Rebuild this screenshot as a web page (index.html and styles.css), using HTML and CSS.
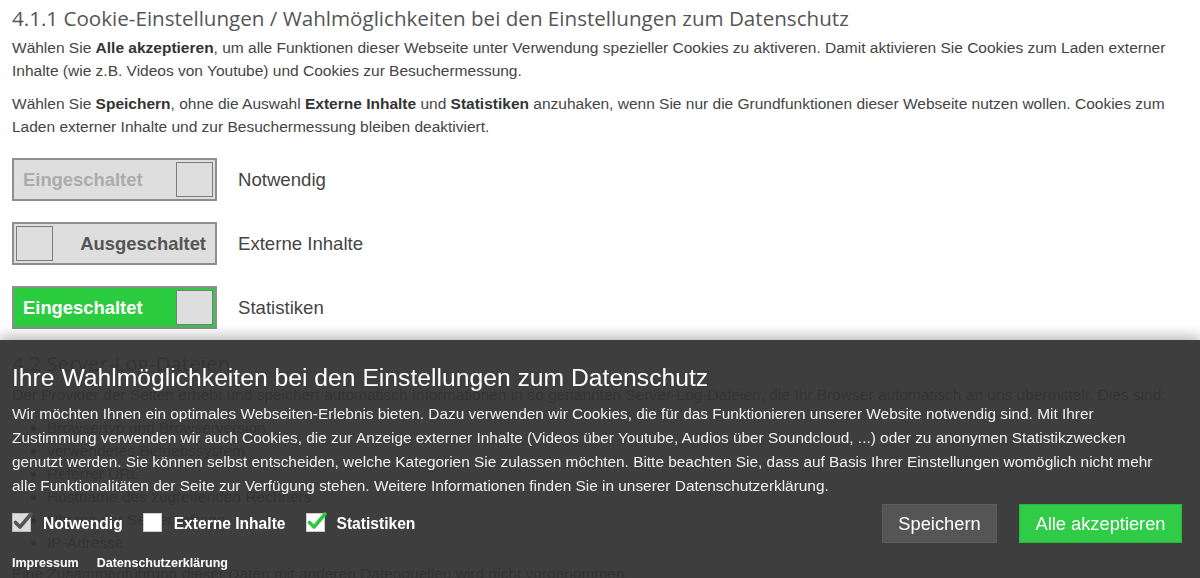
FILE: index.html
```html
<!DOCTYPE html>
<html lang="de">
<head>
<meta charset="utf-8">
<title>Datenschutz</title>
<link rel="stylesheet" href="styles.css">
</head>
<body>
<main class="page">
  <h2 class="h">4.1.1 Cookie-Einstellungen / Wahlmöglichkeiten bei den Einstellungen zum Datenschutz</h2>
  <p class="p">Wählen Sie <b>Alle akzeptieren</b>, um alle Funktionen dieser Webseite unter Verwendung spezieller Cookies zu aktiveren. Damit aktivieren Sie Cookies zum Laden externer Inhalte (wie z.B. Videos von Youtube) und Cookies zur Besuchermessung.</p>
  <p class="p">Wählen Sie <b>Speichern</b>, ohne die Auswahl <b>Externe Inhalte</b> und <b>Statistiken</b> anzuhaken, wenn Sie nur die Grundfunktionen dieser Webseite nutzen wollen. Cookies zum Laden externer Inhalte und zur Besuchermessung bleiben deaktiviert.</p>

  <div class="toggles">
    <div class="trow">
      <div class="toggle on disabled"><span class="ttext">Eingeschaltet</span><span class="knob"></span></div>
      <span class="tlabel">Notwendig</span>
    </div>
    <div class="trow">
      <div class="toggle off"><span class="knob"></span><span class="ttext">Ausgeschaltet</span></div>
      <span class="tlabel">Externe Inhalte</span>
    </div>
    <div class="trow">
      <div class="toggle on green"><span class="ttext">Eingeschaltet</span><span class="knob"></span></div>
      <span class="tlabel">Statistiken</span>
    </div>
  </div>

  <h2 class="h h2">4.2 Server-Log-Dateien</h2>
  <p class="p">Der Provider der Seiten erhebt und speichert automatisch Informationen in so genannten Server-Log-Dateien, die Ihr Browser automatisch an uns übermittelt. Dies sind:</p>
  <ul class="list">
    <li>Browsertyp und Browserversion</li>
    <li>verwendetes Betriebssystem</li>
    <li>Referrer URL</li>
    <li>Hostname des zugreifenden Rechners</li>
    <li>Uhrzeit der Serveranfrage</li>
    <li>IP-Adresse</li>
  </ul>
  <p class="p">Eine Zusammenführung dieser Daten mit anderen Datenquellen wird nicht vorgenommen.</p>
</main>

<div class="banner">
  <div class="btitle">Ihre Wahlmöglichkeiten bei den Einstellungen zum Datenschutz</div>
  <p class="btext">Wir möchten Ihnen ein optimales Webseiten-Erlebnis bieten. Dazu verwenden wir Cookies, die für das Funktionieren unserer Website notwendig sind. Mit Ihrer Zustimmung verwenden wir auch Cookies, die zur Anzeige externer Inhalte (Videos über Youtube, Audios über Soundcloud, ...) oder zu anonymen Statistikzwecken genutzt werden. Sie können selbst entscheiden, welche Kategorien Sie zulassen möchten. Bitte beachten Sie, dass auf Basis Ihrer Einstellungen womöglich nicht mehr alle Funktionalitäten der Seite zur Verfügung stehen. Weitere Informationen finden Sie in unserer Datenschutzerklärung.</p>
  <div class="brow">
    <div class="checks">
      <label class="chk">
        <svg class="cbox" width="24" height="24" viewBox="0 0 24 24"><rect x="0.5" y="4.5" width="18" height="18" fill="#dcdcdc" stroke="#bbb"/><path d="M3.5 13.5 L8 18 L19 5" fill="none" stroke="#555" stroke-width="3.6" stroke-linecap="round" stroke-linejoin="round"/></svg>
        <span>Notwendig</span>
      </label>
      <label class="chk">
        <svg class="cbox" width="24" height="24" viewBox="0 0 24 24"><rect x="0.5" y="4.5" width="18" height="18" fill="#fff" stroke="#ccc"/></svg>
        <span>Externe Inhalte</span>
      </label>
      <label class="chk">
        <svg class="cbox" width="24" height="24" viewBox="0 0 24 24"><rect x="0.5" y="4.5" width="18" height="18" fill="#fff" stroke="#ccc"/><path d="M3.5 13.5 L8 18 L19 5" fill="none" stroke="#2ec840" stroke-width="3.6" stroke-linecap="round" stroke-linejoin="round"/></svg>
        <span>Statistiken</span>
      </label>
    </div>
    <div class="buttons">
      <button class="btn save">Speichern</button>
      <button class="btn accept">Alle akzeptieren</button>
    </div>
  </div>
  <div class="links">
    <a class="lnk">Impressum</a>
    <a class="lnk">Datenschutzerklärung</a>
  </div>
</div>
</body>
</html>
```

FILE: styles.css
```css
html, body {
  margin: 0;
  padding: 0;
  background: #fff;
}
body {
  font-family: "Liberation Sans", Arial, sans-serif;
  color: #444;
  overflow: hidden;
  height: 578px;
}
.page {
  padding: 4px 12px 0 12px;
}
.h {
  font-family: "Open Sans", sans-serif;
  font-weight: 400;
  font-size: 20.6px;
  line-height: 28px;
  color: #555;
  margin: 0 0 4px 0;
}
.h2 {
  margin-top: 20px;
  margin-bottom: 6px;
}
.p {
  font-size: 15.5px;
  line-height: 23px;
  margin: 0 0 10px 0;
  color: #444;
}
.p b { color: #333; }
.toggles {
  display: flex;
  flex-direction: column;
  gap: 21px;
  margin-top: 20px;
}
.trow {
  display: flex;
  align-items: center;
  gap: 21px;
}
.toggle {
  box-sizing: border-box;
  width: 205px;
  height: 43px;
  border: 2px solid #8e8e8e;
  background: #dedede;
  padding: 2px;
  display: flex;
  align-items: center;
  justify-content: space-between;
}
.ttext {
  font-weight: 700;
  font-size: 18.4px;
  padding: 0 7px;
}
.knob {
  box-sizing: border-box;
  width: 37px;
  height: 35px;
  background: #dedede;
  border: 1px solid #7c7c7c;
}
.toggle.disabled .ttext { color: #ababab; }
.toggle.off .ttext { color: #555; padding-right: 7px; }
.toggle.green { background: #2ccc40; }
.toggle.green .ttext { color: #fff; }
.tlabel {
  font-size: 18.6px;
  color: #444;
}
.list {
  margin: 10px 0 8px 0;
  padding-left: 35px;
  font-size: 15.5px;
  line-height: 23px;
}

.banner {
  position: fixed;
  left: 0;
  right: 0;
  bottom: 0;
  height: 238px;
  box-sizing: border-box;
  background: rgba(50, 50, 50, 0.94);
  box-shadow: 0 -4px 12px rgba(0, 0, 0, 0.28);
  padding: 24px 18px 0 12px;
  color: #fff;
}
.btitle {
  font-size: 24.7px;
  line-height: 28px;
  color: #fff;
}
.btext {
  margin: 10px 22px 0 0;
  font-size: 15.4px;
  line-height: 24px;
  color: #f0f0f0;
}
.brow {
  display: flex;
  align-items: center;
  justify-content: space-between;
  margin-top: 6px;
}
.checks {
  display: flex;
  align-items: center;
  gap: 20px;
}
.chk {
  display: flex;
  align-items: center;
  gap: 7px;
  font-weight: 700;
  font-size: 15.6px;
  color: #fff;
}
.cbox {
  display: block;
  margin-top: -6px;
}
.buttons {
  display: flex;
  gap: 22px;
}
.btn {
  font-family: "Liberation Sans", Arial, sans-serif;
  font-size: 18.3px;
  color: #fff;
  height: 39px;
  border: 1px solid #5c5c5c;
  padding: 0 10px;
  cursor: pointer;
}
.save {
  background: #555;
  width: 115px;
}
.accept {
  background: #30cc48;
  border-color: #28b83e;
  width: 163px;
}
.links {
  display: flex;
  gap: 18px;
  margin-top: 12px;
}
.lnk {
  font-size: 12.5px;
  font-weight: 700;
  line-height: 16px;
  color: #fff;
}
```
